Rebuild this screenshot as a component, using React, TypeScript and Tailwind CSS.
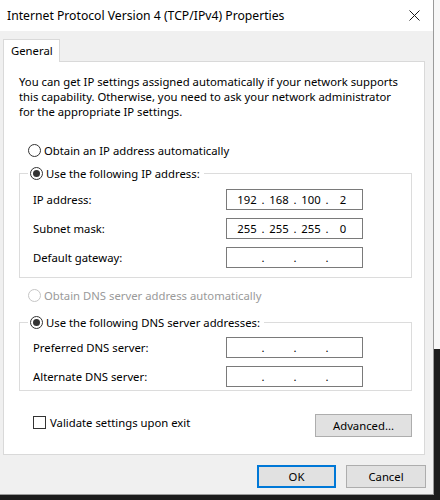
const font = { fontFamily: '"Noto Sans", "Open Sans", sans-serif' };

function Radio({ checked, disabled, label }: { checked?: boolean; disabled?: boolean; label: string }) {
  return (
    <div className={"flex items-center gap-[3px] h-[16px] " + (disabled ? "text-[#9a9a9a]" : "text-black")}>
      <span
        className={
          "flex h-[13px] w-[13px] items-center justify-center rounded-full border bg-white " +
          (disabled ? "border-[#c6c6c6]" : "border-[#333333]")
        }
      >
        {checked && <span className="h-[7px] w-[7px] rounded-full bg-[#333333]" />}
      </span>
      <span>{label}</span>
    </div>
  );
}

function IpBox({ parts }: { parts: string[] }) {
  return (
    <div className="flex h-[21px] w-[137px] items-center border border-[#7a7a7a] bg-white pl-[7px]">
      {parts.map((p, i) => (
        <div key={i} className="flex items-center">
          <span className="w-[26px] text-center">{p}</span>
          {i < 3 && <span className="w-[6px] text-center">.</span>}
        </div>
      ))}
    </div>
  );
}

function Row({ label, parts }: { label: string; parts: string[] }) {
  return (
    <div className="flex items-center justify-between">
      <span>{label}</span>
      <IpBox parts={parts} />
    </div>
  );
}

const empty = ["", "", "", ""];

export default function App() {
  return (
    <div className="flex h-[500px] w-[440px] flex-col bg-[#1c1c1c] text-[11.3px] leading-[15px]" style={font}>
      <div className="flex h-[495px]">
        <div className="flex w-[434px] flex-col border-r border-b border-[#9a9a9a] bg-[#f0f0f0]">
          {/* title bar */}
          <div className="flex h-[31px] items-center justify-between bg-white pl-[7px] pr-[13px] text-[12.2px]">
            <span>Internet Protocol Version 4 (TCP/IPv4) Properties</span>
            <svg width="11" height="11" viewBox="0 0 11 11">
              <path d="M0.5 0.5 L10.5 10.5 M10.5 0.5 L0.5 10.5" stroke="#1a1a1a" strokeWidth="1" />
            </svg>
          </div>

          {/* tabs */}
          <div className="ml-[3px] mt-[8px] flex">
            <div className="relative z-10 -mb-px h-[23px] w-[57px] border border-b-0 border-[#d9d9d9] bg-white pl-[7px] pt-[3px]">
              General
            </div>
          </div>

          {/* panel */}
          <div className="ml-[3px] flex h-[394px] w-[422px] flex-col border border-[#d9d9d9] bg-white pl-[15px] pr-[11px] pt-[12px]">
            <p className="w-[390px]">
              You can get IP settings assigned automatically if your network supports this capability. Otherwise, you
              need to ask your network administrator for the appropriate IP settings.
            </p>

            <div className="ml-[9px] mt-[23px]">
              <Radio label="Obtain an IP address automatically" />
            </div>

            <fieldset className="mt-[7px] w-[393px] border border-[#dcdcdc] px-[13px] pb-[9px]">
              <legend className="ml-[-5px] px-[2px] pr-[4px]">
                <Radio checked label="Use the following IP address:" />
              </legend>
              <div className="mt-[8px] flex w-[330px] flex-col gap-[8px]">
                <Row label="IP address:" parts={["192", "168", "100", "2"]} />
                <Row label="Subnet mask:" parts={["255", "255", "255", "0"]} />
                <Row label="Default gateway:" parts={empty} />
              </div>
            </fieldset>

            <div className="ml-[9px] mt-[9px]">
              <Radio disabled label="Obtain DNS server address automatically" />
            </div>

            <fieldset className="mt-[11px] w-[393px] border border-[#dcdcdc] px-[13px] pb-[3px]">
              <legend className="ml-[-5px] px-[2px] pr-[4px]">
                <Radio checked label="Use the following DNS server addresses:" />
              </legend>
              <div className="mt-[7px] flex w-[330px] flex-col gap-[8px]">
                <Row label="Preferred DNS server:" parts={empty} />
                <Row label="Alternate DNS server:" parts={empty} />
              </div>
            </fieldset>

            <div className="mt-[23px] flex items-start justify-between">
              <div className="ml-[14px] mt-[1px] flex items-center gap-[4px]">
                <span className="h-[13px] w-[13px] border border-[#333333] bg-white" />
                <span>Validate settings upon exit</span>
              </div>
              <button className="mr-[1px] h-[23px] w-[97px] border border-[#adadad] bg-[#e1e1e1] text-black">
                Advanced...
              </button>
            </div>
          </div>

          {/* footer buttons */}
          <div className="mt-[10px] flex justify-end gap-[10px] pr-[7px]">
            <button className="h-[23px] w-[79px] border-2 border-[#0078d7] bg-[#e1e1e1] text-black">OK</button>
            <button className="h-[23px] w-[80px] border border-[#adadad] bg-[#e1e1e1] text-black">Cancel</button>
          </div>
        </div>
        <div className="flex flex-1 flex-col">
          <div className="h-[349px] bg-[#f7f7f7]" />
          <div className="flex-1 bg-[#1c1c1c]" />
        </div>
      </div>
    </div>
  );
}
